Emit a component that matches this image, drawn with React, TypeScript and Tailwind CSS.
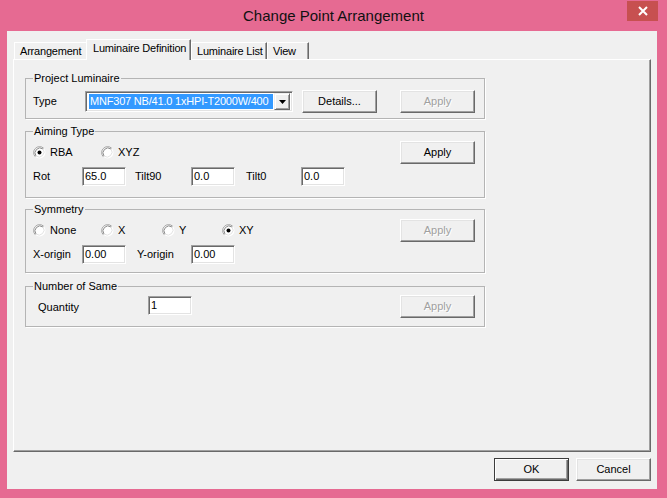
import type { ReactNode } from 'react';

// Classic raised push button
function Btn({
  children,
  disabled,
  isDefault,
  className = '',
}: {
  children: ReactNode;
  disabled?: boolean;
  isDefault?: boolean;
  className?: string;
}) {
  const frame = isDefault
    ? 'border border-[#3c3c3c] shadow-[inset_1px_1px_0_#fff,inset_-1px_-1px_0_#696969,inset_-2px_-2px_0_#a0a0a0]'
    : 'border border-t-white border-l-white border-r-[#696969] border-b-[#696969] shadow-[inset_-1px_-1px_0_#a0a0a0,inset_1px_1px_0_#e3e3e3]';
  return (
    <button
      className={`w-[75px] h-[23px] shrink-0 flex items-center justify-center bg-[#f0f0f0] ${frame} ${
        disabled ? 'text-[#a0a0a0] [text-shadow:1px_1px_0_#fff]' : 'text-black'
      } ${className}`}
    >
      {children}
    </button>
  );
}

function Edit({ value, className = '' }: { value: string; className?: string }) {
  return (
    <div
      className={`w-[44px] h-[19px] shrink-0 bg-white flex items-center pl-[2px] border border-t-[#a0a0a0] border-l-[#a0a0a0] border-r-white border-b-white shadow-[inset_1px_1px_0_#696969,inset_-1px_-1px_0_#e3e3e3] ${className}`}
    >
      {value}
    </div>
  );
}

function Radio({ label, checked, className = '' }: { label: string; checked?: boolean; className?: string }) {
  return (
    <div className={`flex items-center shrink-0 ${className}`}>
      <svg width="13" height="13" viewBox="0 0 13 13" className="shrink-0">
        <circle cx="6.5" cy="6.5" r="6" fill="#fff" />
        <path d="M2.26 10.74 A6 6 0 0 1 10.74 2.26" stroke="#a0a0a0" strokeWidth="1" fill="none" />
        <path d="M3.0 10.0 A5 5 0 0 1 10.0 3.0" stroke="#8a8a8a" strokeWidth="1" fill="none" />
        <path d="M10.0 3.0 A5 5 0 0 1 3.0 10.0" stroke="#e3e3e3" strokeWidth="1" fill="none" />
        {checked && <circle cx="6.5" cy="6.5" r="2" fill="#000" />}
      </svg>
      <span className="ml-[4px]">{label}</span>
    </div>
  );
}

function Group({ title, children, className = '' }: { title: string; children: ReactNode; className?: string }) {
  return (
    <fieldset
      className={`w-[460px] ml-[11px] border border-[#b4b4b4] shadow-[1px_1px_0_#fff] pl-[7px] pr-[9px] ${className}`}
    >
      <legend className="px-[1px] leading-[13px]">{title}</legend>
      {children}
    </fieldset>
  );
}

export default function App() {
  return (
    <div className="w-[667px] h-[498px] bg-[#e66a92] flex flex-col font-['Liberation_Sans',Arial,sans-serif] text-[11px] leading-[13px] text-black">
      {/* Title bar */}
      <div className="relative h-[31px] flex items-center justify-center">
        <span className="text-[15px] leading-[18px] text-[#111] mt-[1px]">Change Point Arrangement</span>
        <div className="absolute right-[9px] top-[1px] w-[31px] h-[20px] bg-[#c75050] flex items-center justify-center">
          <svg width="10" height="10" viewBox="0 0 10 10">
            <path d="M1 1 L9 9 M9 1 L1 9" stroke="#fff" strokeWidth="2" />
          </svg>
        </div>
      </div>

      {/* Client area */}
      <div className="ml-[7px] w-[650px] h-[458px] bg-[#f0f0f0] px-[6px] pt-[8px] flex flex-col">
        {/* Tabs */}
        <div className="flex items-end ml-[1px] h-[20px] whitespace-nowrap tracking-[-0.2px]">
          <div className="w-[72px] h-[17px] border-t border-l border-white pl-[5px] flex items-center">Arrangement</div>
          <div className="relative z-10 w-[105px] h-[21px] -mb-px bg-[#f0f0f0] border-t border-l border-white border-r border-r-[#696969] shadow-[inset_-1px_0_0_#a0a0a0] pl-[6px] pb-[3px] flex items-center">
            Luminaire Definition
          </div>
          <div className="w-[76px] h-[17px] border-t border-l border-white border-r border-r-[#696969] shadow-[inset_-1px_0_0_#a0a0a0] pl-[5px] flex items-center">
            Luminaire List
          </div>
          <div className="w-[42px] h-[17px] border-t border-l border-white border-r border-r-[#696969] shadow-[inset_-1px_0_0_#a0a0a0] pl-[5px] flex items-center">
            View
          </div>
        </div>

        {/* Tab page */}
        <div className="h-[393px] border border-t-white border-l-white border-r-[#696969] border-b-[#696969] shadow-[inset_-1px_-1px_0_#a0a0a0] pt-[12px]">
          <Group title="Project Luminaire" className="pt-[5px] pb-[5px]">
            <div className="flex items-center h-[23px]">
              <span className="w-[52px] shrink-0">Type</span>
              <div className="w-[208px] h-[21px] shrink-0 bg-white flex items-center p-[2px] border border-t-[#a0a0a0] border-l-[#a0a0a0] border-r-white border-b-white shadow-[inset_1px_1px_0_#696969,inset_-1px_-1px_0_#e3e3e3]">
                <div className="flex-1 min-w-0 h-[15px] ml-[1px] bg-[#3399ff] text-white whitespace-nowrap overflow-hidden pl-[1px] tracking-[-0.2px] flex items-center">
                  MNF307 NB/41.0 1xHPI-T2000W/400
                </div>
                <div className="w-[16px] h-[17px] shrink-0 ml-[1px] bg-[#f0f0f0] flex items-center justify-center border border-t-[#f0f0f0] border-l-[#f0f0f0] border-r-[#696969] border-b-[#696969] shadow-[inset_1px_1px_0_#fff,inset_-1px_-1px_0_#a0a0a0]">
                  <svg width="7" height="4" viewBox="0 0 7 4">
                    <path d="M0 0 H7 L3.5 4 Z" fill="#000" />
                  </svg>
                </div>
              </div>
              <Btn className="ml-[9px]">Details...</Btn>
              <Btn disabled className="ml-auto">Apply</Btn>
            </div>
          </Group>

          <Group title="Aiming Type" className="mt-[6px] pt-[3px] pb-[11px]">
            <div className="flex items-center h-[23px]">
              <Radio label="RBA" checked className="w-[68px]" />
              <Radio label="XYZ" />
              <Btn className="ml-auto">Apply</Btn>
            </div>
            <div className="flex items-center mt-[3px]">
              <span className="w-[49px] shrink-0">Rot</span>
              <Edit value="65.0" />
              <span className="w-[56px] ml-[9px] shrink-0">Tilt90</span>
              <Edit value="0.0" />
              <span className="w-[55px] ml-[11px] shrink-0">Tilt0</span>
              <Edit value="0.0" />
            </div>
          </Group>

          <Group title="Symmetry" className="mt-[5px] pt-[3px] pb-[8px]">
            <div className="flex items-center h-[23px]">
              <Radio label="None" className="w-[68px]" />
              <Radio label="X" className="w-[61px]" />
              <Radio label="Y" className="w-[60px]" />
              <Radio label="XY" checked />
              <Btn disabled className="ml-auto">Apply</Btn>
            </div>
            <div className="flex items-center mt-[3px]">
              <span className="w-[49px] shrink-0">X-origin</span>
              <Edit value="0.00" />
              <span className="w-[54px] ml-[11px] shrink-0">Y-origin</span>
              <Edit value="0.00" />
            </div>
          </Group>

          <Group title="Number of Same" className="mt-[7px] pt-[2px] pb-[8px]">
            <div className="flex items-start h-[23px]">
              <span className="w-[110px] ml-[5px] mt-[6px] shrink-0">Quantity</span>
              <Edit value="1" className="mt-[1px]" />
              <Btn disabled className="ml-auto">Apply</Btn>
            </div>
          </Group>
        </div>

        {/* Dialog buttons */}
        <div className="flex justify-end gap-[7px] mt-[6px]">
          <Btn isDefault>OK</Btn>
          <Btn>Cancel</Btn>
        </div>
      </div>
    </div>
  );
}
